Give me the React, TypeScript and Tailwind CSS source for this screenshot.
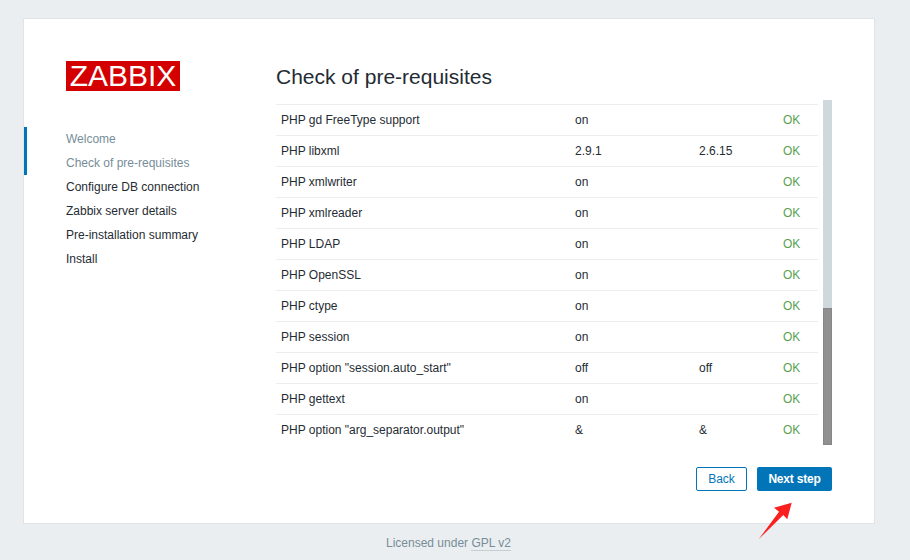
const STEPS = [
  { label: 'Welcome', done: true },
  { label: 'Check of pre-requisites', done: true },
  { label: 'Configure DB connection', done: false },
  { label: 'Zabbix server details', done: false },
  { label: 'Pre-installation summary', done: false },
  { label: 'Install', done: false },
]

const ROWS = [
  { name: 'PHP gd FreeType support', current: 'on', required: '' },
  { name: 'PHP libxml', current: '2.9.1', required: '2.6.15' },
  { name: 'PHP xmlwriter', current: 'on', required: '' },
  { name: 'PHP xmlreader', current: 'on', required: '' },
  { name: 'PHP LDAP', current: 'on', required: '' },
  { name: 'PHP OpenSSL', current: 'on', required: '' },
  { name: 'PHP ctype', current: 'on', required: '' },
  { name: 'PHP session', current: 'on', required: '' },
  { name: 'PHP option "session.auto_start"', current: 'off', required: 'off' },
  { name: 'PHP gettext', current: 'on', required: '' },
  { name: 'PHP option "arg_separator.output"', current: '&', required: '&' },
]

export default function App() {
  return (
    <div className="relative h-[560px] w-[910px] overflow-hidden bg-[#ebeef0] font-['Liberation_Sans',Arial,sans-serif] text-xs text-[#1f2c33]">
      <div className="pl-[23px] pt-[18px]">
        <div className="flex h-[506px] w-[852px] border border-[#dfe4e7] bg-white">
          {/* Sidebar */}
          <aside className="w-[252px] flex-shrink-0 pt-[42px]">
            <div className="ml-[42px] flex h-[30px] w-[114px] items-center justify-center bg-[#d40000] text-[30px] leading-none text-white">
              ZABBIX
            </div>
            <div className="mt-[36px] flex">
              <div className="h-[48px] w-[3px] bg-[#0275b8]" />
              <ul className="ml-[39px]">
                {STEPS.map(s => (
                  <li key={s.label} className={`h-6 leading-6 ${s.done ? 'text-[#768d99]' : 'text-[#1f2c33]'}`}>
                    {s.label}
                  </li>
                ))}
              </ul>
            </div>
          </aside>

          {/* Main */}
          <main className="flex-1 pt-[44px]">
            <h1 className="h-[37px] text-[21px] leading-[28px] text-[#1f2c33]">Check of pre-requisites</h1>
            <div className="flex h-[345px]">
              <div className="h-full w-[542px] overflow-hidden pt-[4px]">
                {ROWS.map(r => (
                  <div key={r.name} className="flex h-[31px] items-center border-t border-[#ebeef0] pl-[5px]">
                    <span className="w-[294px]">{r.name}</span>
                    <span className="w-[124px]">{r.current}</span>
                    <span className="w-[84px]">{r.required}</span>
                    <span className="text-[#59a14f]">OK</span>
                  </div>
                ))}
              </div>
              <div className="ml-[5px] flex h-full w-[9px] flex-col justify-end bg-[#cfd8dc]">
                <div className="h-[137px] border border-[#868686] bg-[#909090]" />
              </div>
            </div>
            <div className="mt-[22px] flex w-[556px] justify-end gap-[10px]">
              <button className="h-6 w-[51px] rounded-[2px] border border-[#0275b8] bg-white text-xs text-[#0275b8]">Back</button>
              <button className="h-6 w-[75px] rounded-[2px] bg-[#0275b8] text-xs font-bold tracking-[-0.2px] text-white">Next step</button>
            </div>
          </main>
        </div>
      </div>

      <div className="mt-[10px] pl-[386px] leading-[18px] text-[#768d99]">
        Licensed under <span className="border-b border-[#c5ced3]">GPL v2</span>
      </div>

      {/* Annotation arrow */}
      <svg className="absolute left-[750px] top-[495px]" width="50" height="50" viewBox="0 0 50 50">
        <path d="M8.7 44.3 L29 16.7 L24 12.7 L41.7 7.7 L37.3 24.3 L33.3 20 Z" fill="#fb2020" />
      </svg>
    </div>
  )
}
